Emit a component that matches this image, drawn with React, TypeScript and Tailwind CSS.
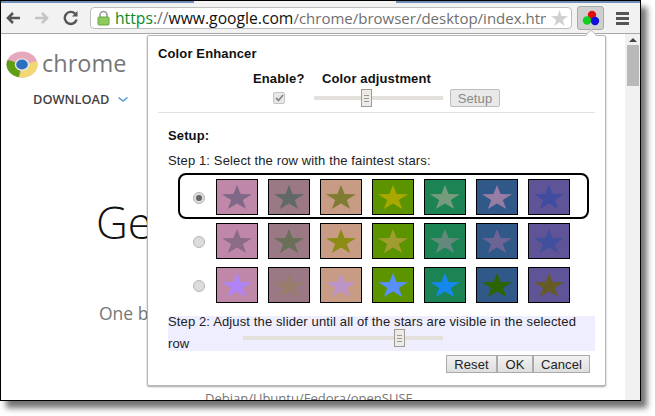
const swatches = ["#c088a8", "#9a7884", "#c89c84", "#5c9400", "#1c8454", "#305888", "#605498"];

const rows = [
  { checked: true, stars: ["#806888", "#606868", "#807c34", "#a8a800", "#749c7c", "#987ca4", "#404ca0"] },
  { checked: false, stars: ["#8c6c84", "#687058", "#8c8c14", "#a09c30", "#64887c", "#6c6494", "#40509c"] },
  { checked: false, stars: ["#b084f4", "#987c6c", "#bc94c8", "#5890f8", "#1488ec", "#2c6400", "#645c24"] },
];

const buttons = [
  { label: "Reset", cls: "w-[51px]" },
  { label: "OK", cls: "w-[36px]" },
  { label: "Cancel", cls: "w-[57px]" },
];

function Star({ fill, className }: { fill: string; className?: string }) {
  return (
    <svg viewBox="0 0 30 28" preserveAspectRatio="none" className={className} fill={fill}>
      <polygon points="15,0 18.6,10.5 30,10.7 20.8,17.4 24.2,28 15,21.6 5.8,28 9.2,17.4 0,10.7 11.4,10.5" />
    </svg>
  );
}

function Thumb() {
  return (
    <div className="absolute top-1/2 flex h-[18px] w-[11px] -translate-y-1/2 flex-col items-center justify-center gap-[2px] border border-[#a09c94] bg-[#eeebe6] [left:var(--thumb)]">
      <span className="h-px w-[5px] bg-[#999]" />
      <span className="h-px w-[5px] bg-[#999]" />
      <span className="h-px w-[5px] bg-[#999]" />
    </div>
  );
}

function Radio({ checked }: { checked: boolean }) {
  return (
    <span className="flex size-3 items-center justify-center rounded-full border border-[#b5b5b5] bg-[#dcdcdc]">
      {checked && <span className="size-[6px] rounded-full bg-[#666]" />}
    </span>
  );
}

function ChromeLogo() {
  return (
    <svg width="32" height="27" viewBox="0 0 33 28">
      <ellipse cx="16.5" cy="14" rx="16" ry="13.5" fill="#e8a8bc" />
      <path d="M16.5 14 L1.6 9 A16 13.5 0 0 0 13 27.2 Z" fill="#5f9e12" />
      <path d="M16.5 14 L32.2 10.5 A16 13.5 0 0 1 14 27.4 Z" fill="#f1d873" />
      <ellipse cx="16.5" cy="14" rx="7.5" ry="6.5" fill="#e8e8e8" />
      <ellipse cx="16.5" cy="14" rx="6" ry="5.2" fill="#2a72c0" />
    </svg>
  );
}

function Toolbar() {
  return (
    <div className="flex h-[31px] shrink-0 items-center border-b border-[#a8a8a8] bg-[#f2f2f2]">
      <div className="flex w-[89px] shrink-0 items-center">
        <svg width="16" height="14" viewBox="0 0 16 14" className="ml-[4px]" fill="none" stroke="#555" strokeWidth="2.6">
          <path d="M15 7H3M8 2 3 7l5 5" />
        </svg>
        <svg width="16" height="14" viewBox="0 0 16 14" className="ml-[13px]" fill="none" stroke="#c4c4c4" strokeWidth="2.6">
          <path d="M1 7h12M8 2l5 5-5 5" />
        </svg>
        <svg width="16" height="16" viewBox="0 0 16 16" className="ml-[13px]" fill="none" stroke="#555" strokeWidth="2.4">
          <path d="M13.6 9.500A6 6 0 1 1 12 3.600" />
          <path d="M14.500 1v5.500H9" fill="#555" stroke="none" />
        </svg>
      </div>
      <div className="flex h-[22px] w-[482px] shrink-0 items-center rounded-sm border border-[#bdbdbd] bg-white">
        <svg width="13" height="16" viewBox="0 0 13 16" className="ml-[6px] shrink-0">
          <path d="M3 7V5a3.500 3.500 0 0 1 7 0v2" fill="none" stroke="#9a9a9a" strokeWidth="1.600" />
          <rect x="1" y="7" width="11" height="8" rx="1" fill="#8ccb5e" stroke="#6aa53e" />
        </svg>
        <div className="ml-[5px] w-[431px] shrink-0 overflow-hidden whitespace-nowrap font-['Open_Sans',sans-serif] text-[15.7px] leading-[22px] text-[#6f6f6f]">
          <span className="text-[#0a8a28]">https</span>
          <span>://</span>
          <span className="text-[#111]">www.google.com</span>
          <span className="text-[15px]">/chrome/browser/desktop/index.html</span>
        </div>
        <svg width="17" height="16" viewBox="0 0 30 28" className="ml-[5px] shrink-0" fill="#d0d0d0">
          <polygon points="15,0 18.6,10.5 30,10.7 20.8,17.4 24.2,28 15,21.6 5.8,28 9.2,17.4 0,10.7 11.4,10.5" />
        </svg>
      </div>
      <div className="ml-[5px] flex h-[24px] w-[27px] shrink-0 items-center justify-center rounded-[3px] border border-[#a9a9a9] bg-[#cfcfcf]">
        <svg width="18" height="16" viewBox="0 0 18 16">
          <circle cx="10" cy="5" r="4.200" fill="#e01010" />
          <circle cx="5" cy="10.500" r="4.200" fill="#10d020" />
          <circle cx="13" cy="11" r="4.200" fill="#1010d8" />
        </svg>
      </div>
      <div className="ml-[12px] flex w-[13px] shrink-0 flex-col gap-[2px]">
        <span className="h-[3px] bg-[#555]" />
        <span className="h-[3px] bg-[#555]" />
        <span className="h-[3px] bg-[#555]" />
      </div>
    </div>
  );
}

function Page() {
  return (
    <div className="flex min-h-0 flex-1">
      <div className="min-w-0 flex-1 overflow-hidden bg-white font-['Open_Sans',sans-serif]">
        <div className="ml-[5px] mt-[17px] flex items-center gap-[4px]">
          <ChromeLogo />
          <span className="-translate-y-[1px] text-[23.5px] leading-[27px] text-[#777]">chrome</span>
        </div>
        <div className="ml-[32px] mt-[13px] flex items-center gap-[9px] text-[12.8px] font-semibold leading-[16px] text-[#444]">
          DOWNLOAD
          <svg width="10" height="5" viewBox="0 0 10 5" fill="none" stroke="#5b9bd5" strokeWidth="1.500">
            <path d="M0.500 0.500 5 4l4.500-3.500" />
          </svg>
        </div>
        <div className="ml-[95px] mt-[85px] text-[44px] font-light leading-[60px] text-[#111]">Ge</div>
        <div className="ml-[98px] mt-[50px] text-[17.5px] leading-[22px] text-[#777]">One b</div>
        <div className="ml-[204px] mt-[64px] whitespace-nowrap text-[13px] leading-[20px] text-[#777]">
          Debian/Ubuntu/Fedora/openSUSE
        </div>
      </div>
      <div className="flex w-[15px] shrink-0 flex-col items-center bg-[#f1f1f1]">
        <span className="mt-[4px] size-0 border-x-[4px] border-b-[4px] border-x-transparent border-b-[#444]" />
        <span className="mt-[3px] h-[41px] w-[12px] bg-[#b9b9b9]" />
      </div>
    </div>
  );
}

function Popup() {
  return (
    <div className="absolute left-[146px] top-[34px] h-[351px] w-[459px] rounded-[2px] border border-[#b5b5b5] bg-white font-['Liberation_Sans',sans-serif] text-[13px] leading-[15px] tracking-[0.13px] text-[#222] shadow-[0_1px_2px_rgba(0,0,0,0.35)]">
      <span className="absolute -top-[5px] right-[10px] size-2 rotate-45 border-l border-t border-[#c5c5c5] bg-white" />
      <div className="px-[10px] pt-[10px]">
        <div className="font-bold text-[#111]">Color Enhancer</div>
        <div className="ml-[95px] mt-[10px] flex font-bold text-[#111]">
          <span className="w-[69px]">Enable?</span>
          <span>Color adjustment</span>
        </div>
        <div className="mt-[3px] flex items-center">
          <span className="ml-[115px] flex size-[12px] items-center justify-center rounded-[2px] border border-[#c4c4c4] bg-[#e8e8e8]">
            <svg width="9" height="8" viewBox="0 0 9 8" fill="none" stroke="#888" strokeWidth="1.800">
              <path d="M1 4l2.500 2.500L8 1" />
            </svg>
          </span>
          <div className="relative ml-[29px] h-[4px] w-[129px] bg-[#e4e1dc] [--thumb:47px]">
            <Thumb />
          </div>
          <button className="ml-[7px] h-[18px] w-[50px] rounded-[2px] border border-[#bdbdbd] bg-[#e9e9e9] text-center leading-[15px] text-[#8a8a8a]">
            Setup
          </button>
        </div>
        <div className="mt-[5px] h-px w-[437px] bg-[#e2e2e2]" />
      </div>
      <div className="px-[20px] pt-[15px]">
        <div className="font-bold text-[#111]">Setup:</div>
        <div className="mt-[10px]">Step 1: Select the row with the faintest stars:</div>
        <div className="ml-[10px] mt-[5px] flex w-[411px] flex-col">
          {rows.map((row, r) => (
            <div
              key={r}
              className={
                row.checked
                  ? "h-[46px] rounded-[8px] border-2 border-black pt-[4px]"
                  : "h-[44px] border-2 border-transparent pt-[2px]"
              }
            >
              <div className="flex items-center">
                <span className="ml-[13px] mt-[1px] flex w-[12px] shrink-0">
                  <Radio checked={row.checked} />
                </span>
                <div className="ml-[11px] flex gap-[10px]">
                  {swatches.map((c, i) => (
                    <div
                      key={i}
                      className="flex h-[36px] w-[42px] items-center justify-center border border-black"
                      style={{ backgroundColor: c }}
                    >
                      <Star fill={row.stars[i]} className="h-[24px] w-[30px]" />
                    </div>
                  ))}
                </div>
              </div>
            </div>
          ))}
        </div>
        <div className="relative mt-[9px] flow-root h-[35px] w-[427px] bg-[#eeeeff]">
          <div className="-mt-[5px] leading-[22px]">
            Step 2: Adjust the slider until all of the stars are visible in the selected row
          </div>
          <div className="absolute left-[75px] top-[20px] h-[4px] w-[200px] bg-[#e4e1dc] [--thumb:151px]">
            <Thumb />
          </div>
        </div>
        <div className="mt-[4px] flex w-[422px] justify-end">
          {buttons.map((b) => (
            <button
              key={b.label}
              className={`h-[18px] border border-[#aaa] bg-gradient-to-b from-[#f2f2f2] to-[#dedede] leading-[15px] text-[#222] ${b.cls}`}
            >
              {b.label}
            </button>
          ))}
        </div>
      </div>
    </div>
  );
}

export default function App() {
  return (
    <div className="h-[416px] w-[655px] overflow-hidden bg-white">
      <div className="relative flex h-[401px] w-[641px] flex-col border border-black bg-white shadow-[6px_7px_6px_rgba(0,0,0,0.55)]">
        <div className="flex h-[2px] shrink-0">
          <span className="w-[193px] bg-[#6f8fb8]" />
          <span className="w-[202px] bg-[#f2f2f2]" />
          <span className="flex-1 bg-[#6f8fb8]" />
        </div>
        <Toolbar />
        <Page />
        <Popup />
      </div>
    </div>
  );
}
